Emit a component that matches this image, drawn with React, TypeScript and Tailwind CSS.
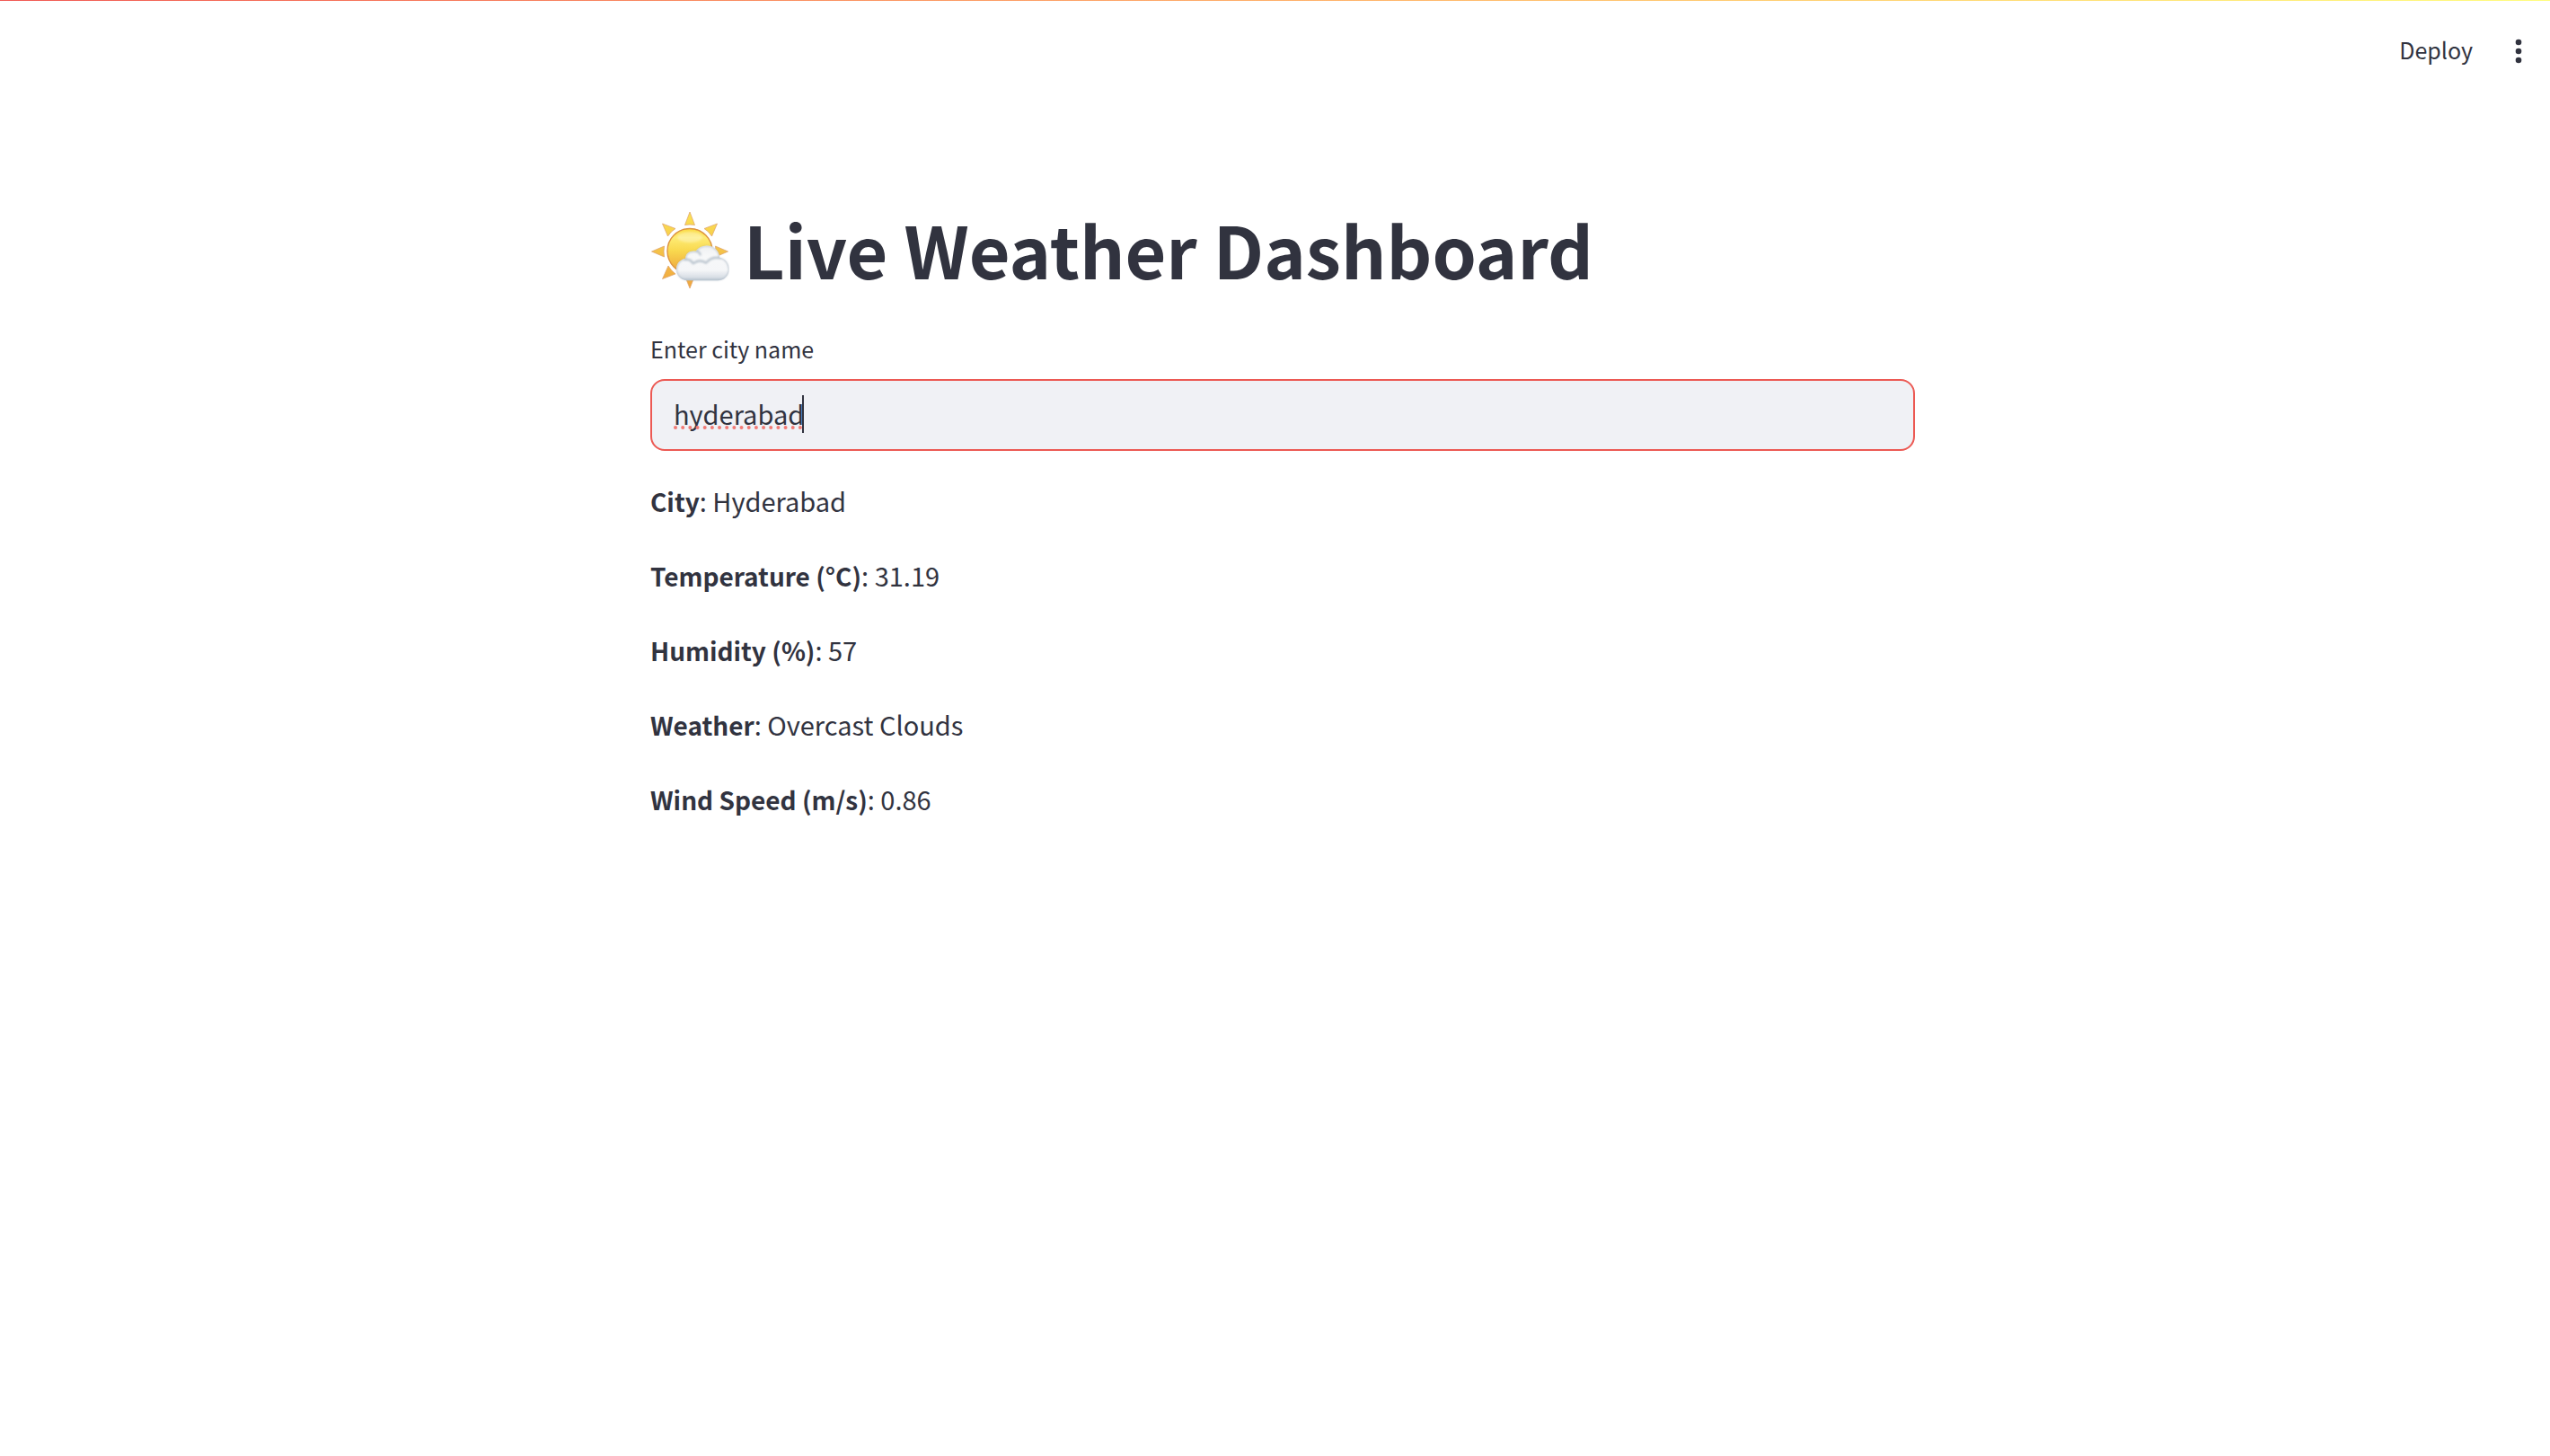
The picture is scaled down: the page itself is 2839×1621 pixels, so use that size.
import { useState } from "react";

const readings = [
  { label: "City", value: "Hyderabad" },
  { label: "Temperature (°C)", value: "31.19" },
  { label: "Humidity (%)", value: "57" },
  { label: "Weather", value: "Overcast Clouds" },
  { label: "Wind Speed (m/s)", value: "0.86" },
];

const cloud =
  "M39 83.500C31 83.500 25.500 78 25.500 71C25.500 64.500 30 59.500 36 58.500C36 52.500 41 49.300 47.500 50.200C50.500 46.200 55 44 60 44C68 44 74 49.500 74.700 57.500C81 58.500 85.500 64 85.500 70.500C85.500 78 80 83.500 72.500 83.500Z";

function SunBehindCloud() {
  return (
    <svg viewBox="1 0 86 88" className="h-[88px] w-[88px] shrink-0" aria-hidden="true">
      <defs>
        <linearGradient id="disc" x1="0" y1="0" x2="0" y2="1">
          <stop offset="0" stopColor="#fbd93f" />
          <stop offset="0.2" stopColor="#fdeb74" />
          <stop offset="0.5" stopColor="#f9d84e" />
          <stop offset="1" stopColor="#eda03a" />
        </linearGradient>
        <linearGradient id="rays" gradientUnits="userSpaceOnUse" x1="0" y1="6" x2="0" y2="92">
          <stop offset="0" stopColor="#fbe052" />
          <stop offset="0.5" stopColor="#f4bf47" />
          <stop offset="1" stopColor="#efa23c" />
        </linearGradient>
        <linearGradient id="cloud" x1="0" y1="0" x2="0" y2="1">
          <stop offset="0" stopColor="#eef0f2" />
          <stop offset="0.3" stopColor="#f7f8f9" />
          <stop offset="0.7" stopColor="#f5f6f8" />
          <stop offset="0.9" stopColor="#d9dfe6" />
          <stop offset="1" stopColor="#b9c5d1" />
        </linearGradient>
        <clipPath id="cloudShape">
          <path d={cloud} />
        </clipPath>
        <filter id="soft" x="-20%" y="-20%" width="140%" height="140%">
          <feGaussianBlur stdDeviation="1.2" />
        </filter>
      </defs>
      <g transform="translate(0 2)">
        <g fill="url(#rays)" stroke="#dda06a" strokeWidth="0.7" strokeLinejoin="round">
          <path d="M44 1L49.500 15.500Q44 14.500 38.500 15.500Z" />
          <path d="M13.500 14L28 19.500Q23 22.500 19.500 28Z" />
          <path d="M74.500 14L60 19.500Q65 22.500 68.500 28Z" />
          <path d="M1.500 45L15.500 39Q14.500 45 15.500 51Z" />
          <path d="M86.500 45L72.500 39Q73.500 45 72.500 51Z" />
          <path d="M13.500 75.500L20 61Q23 66 28 70Z" />
          <path d="M44 86L39 73.500Q44 74.500 49 73.500Z" />
        </g>
        <circle cx="44" cy="44.500" r="25" fill="url(#disc)" stroke="#dd9440" strokeWidth="1.400" />
        <ellipse cx="44" cy="29" rx="14" ry="6" fill="#fff" opacity="0.3" filter="url(#soft)" />
        <g transform="translate(4 -4.500) scale(0.98)">
          <path d={cloud} fill="#8d9dae" opacity="0.3" filter="url(#soft)" />
          <path d={cloud} fill="url(#cloud)" />
          <g clipPath="url(#cloudShape)" fill="none" stroke="#b4bfca" strokeWidth="2.200" filter="url(#soft)">
            <path d="M34 60Q42 58 45 65" />
            <path d="M47 50Q52 50 53 55" />
            <path d="M45 64Q52 58 60 64" />
            <path d="M60 63Q65 56 76 58" />
            <path d={cloud} strokeWidth="1.500" />
          </g>
        </g>
      </g>
    </svg>
  );
}

function SpellingMark() {
  return (
    <svg
      viewBox="0 0 144 4"
      className="pointer-events-none absolute top-[52px] left-[26px] h-1 w-[144px]"
      aria-hidden="true"
    >
      {Array.from({ length: 18 }, (_, i) => (
        <circle key={i} cx={2 + i * 8.17} cy="2" r="2" fill="#f17a74" />
      ))}
    </svg>
  );
}

export default function App() {
  const [city, setCity] = useState("hyderabad");

  return (
    <div className="min-h-screen bg-white font-['Noto_Sans_CJK_SC','Noto_Sans_CJK_JP',sans-serif] text-[29px] leading-[51px] text-[#31333f]">
      <div className="h-px bg-linear-to-r from-[#f05a55] to-[#fffd80]" />
      <header className="flex h-28 items-center justify-end gap-6 pr-6">
        <button type="button" className="px-4 pb-1 text-[25px] leading-10">
          Deploy
        </button>
        <button type="button" aria-label="Main menu" className="flex w-[22px] justify-center">
          <svg viewBox="0 0 8 28" className="h-7 w-2" fill="currentColor">
            <circle cx="4" cy="4" r="3.300" />
            <circle cx="4" cy="14" r="3.300" />
            <circle cx="4" cy="24" r="3.300" />
          </svg>
        </button>
      </header>

      <main className="pt-[111px] pl-[17px]">
        <div className="mx-auto max-w-[1408px]">
          <h1 className="flex items-center gap-4 text-[79px] leading-[106px] font-bold">
            <SunBehindCloud />
            Live Weather Dashboard
          </h1>

          <label htmlFor="city" className="mt-9 block text-[25px] leading-11">
            Enter city name
          </label>
          <div className="relative mt-3">
            <input
              id="city"
              type="text"
              value={city}
              spellCheck={false}
              onChange={(e) => setCity(e.target.value)}
              className="block h-20 w-full rounded-2xl border-2 border-[#ec5953] bg-[#f0f1f5] px-6 pb-1 outline-none"
            />
            {city === "hyderabad" && (
              <>
                <SpellingMark />
                <span className="pointer-events-none absolute top-[18px] left-[169px] h-[42px] w-0.5 bg-[#31333f]" />
              </>
            )}
          </div>

          <div className="mt-[30px] flex flex-col gap-8">
            {readings.map(({ label, value }) => (
              <p key={label}>
                <strong className="text-[28px] leading-none font-semibold">{label}</strong>: {value}
              </p>
            ))}
          </div>
        </div>
      </main>
    </div>
  );
}
